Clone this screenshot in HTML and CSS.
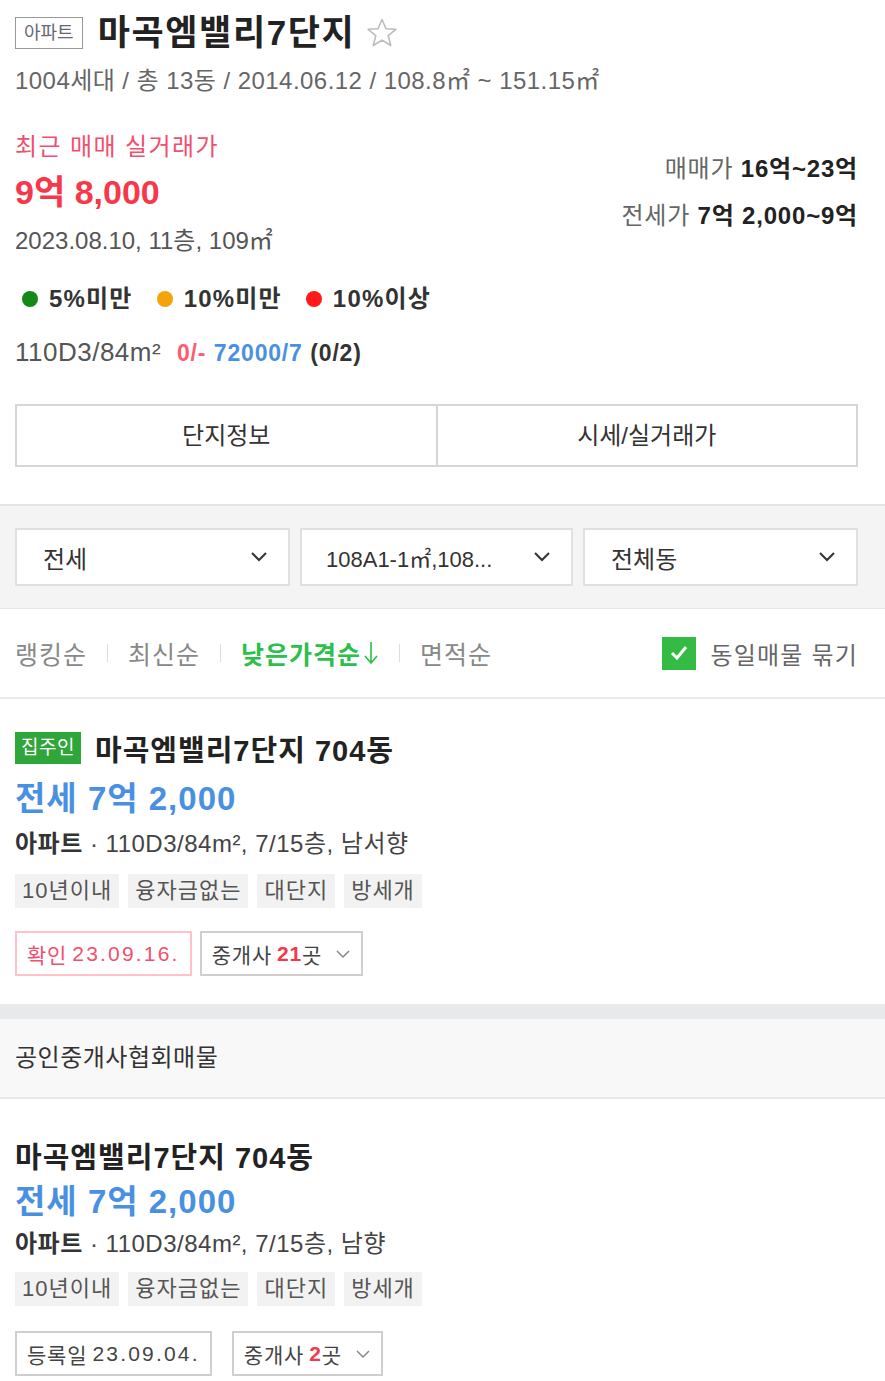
FILE: index.html
```html
<!DOCTYPE html>
<html lang="ko">
<head>
  <meta charset="UTF-8">
  <meta name="viewport" content="width=device-width, initial-scale=1.0">
  <title>마곡엠밸리7단지</title>
  <link rel="stylesheet" href="styles.css">
</head>
<body>
  <div class="complex">
    <div class="title-row">
      <span class="type-badge">아파트</span>
      <h1 class="complex-name">마곡엠밸리7단지</h1>
      <svg class="star" viewBox="0 0 24 24" width="34" height="34">
        <polygon points="12,2.5 14.8,9 21.8,9.4 16.4,13.9 18.2,20.8 12,17 5.8,20.8 7.6,13.9 2.2,9.4 9.2,9" fill="none" stroke="#bbb" stroke-width="1.1" stroke-linejoin="round"/>
      </svg>
    </div>
    <div class="summary">1004세대 / 총 13동 / 2014.06.12 / 108.8㎡ ~ 151.15㎡</div>

    <div class="price-block">
      <div class="recent">
        <div class="recent-label">최근 매매 실거래가</div>
        <div class="recent-price">9억 8,000</div>
        <div class="recent-date">2023.08.10, 11층, 109㎡</div>
      </div>
      <div class="range">
        <div class="range-row">매매가 <b>16억~23억</b></div>
        <div class="range-row range-gap">전세가 <b>7억 2,000~9억</b></div>
      </div>
    </div>

    <div class="legend">
      <span class="legend-item"><i class="dot dot-green"></i>5%미만</span>
      <span class="legend-item"><i class="dot dot-orange"></i>10%미만</span>
      <span class="legend-item"><i class="dot dot-red"></i>10%이상</span>
    </div>

    <div class="area-line">
      110D3/84m² <span class="cnt-red">0/-</span> <span class="cnt-blue">72000/7</span> <span class="cnt-dark">(0/2)</span>
    </div>

    <div class="tabs">
      <a class="tab">단지정보</a>
      <a class="tab">시세/실거래가</a>
    </div>
  </div>

  <div class="filters">
    <div class="select">
      <span>전세</span>
      <svg width="18" height="12" viewBox="0 0 18 12"><polyline points="2,2 9,9 16,2" fill="none" stroke="#333" stroke-width="2"/></svg>
    </div>
    <div class="select select-narrow">
      <span>108A1-1㎡,108...</span>
      <svg width="18" height="12" viewBox="0 0 18 12"><polyline points="2,2 9,9 16,2" fill="none" stroke="#333" stroke-width="2"/></svg>
    </div>
    <div class="select">
      <span>전체동</span>
      <svg width="18" height="12" viewBox="0 0 18 12"><polyline points="2,2 9,9 16,2" fill="none" stroke="#333" stroke-width="2"/></svg>
    </div>
  </div>

  <div class="sort-bar">
    <div class="sort-list">
      <span class="sort">랭킹순</span>
      <span class="sep"></span>
      <span class="sort">최신순</span>
      <span class="sep"></span>
      <span class="sort sort-on">낮은가격순<svg class="arrow" width="16" height="26" viewBox="0 0 16 26"><path d="M8 2 V23 M2 16 L8 23 L14 16" fill="none" stroke="#2cbf4a" stroke-width="1.6"/></svg></span>
      <span class="sep"></span>
      <span class="sort">면적순</span>
    </div>
    <label class="group-check">
      <span class="check-box">
        <svg width="22" height="22" viewBox="0 0 22 22"><polyline points="4,11 9,16 18,5" fill="none" stroke="#fff" stroke-width="3"/></svg>
      </span>
      동일매물 묶기
    </label>
  </div>

  <div class="item">
    <div class="item-title"><span class="owner-badge">집주인</span>마곡엠밸리7단지 704동</div>
    <div class="item-price">전세 7억 2,000</div>
    <div class="item-spec"><b>아파트</b> · 110D3/84m², 7/15층, 남서향</div>
    <div class="tags">
      <span class="tag">10년이내</span>
      <span class="tag">융자금없는</span>
      <span class="tag">대단지</span>
      <span class="tag">방세개</span>
    </div>
    <div class="item-btns">
      <span class="btn-box btn-confirm">확인 <em>23.09.16.</em></span>
      <span class="btn-box">중개사 <strong>21</strong>곳
        <svg width="16" height="10" viewBox="0 0 16 10"><polyline points="2,2 8,8 14,2" fill="none" stroke="#888" stroke-width="1.5"/></svg>
      </span>
    </div>
  </div>

  <div class="band"></div>
  <div class="section-head">공인중개사협회매물</div>

  <div class="item item-second">
    <div class="item-title">마곡엠밸리7단지 704동</div>
    <div class="item-price">전세 7억 2,000</div>
    <div class="item-spec"><b>아파트</b> · 110D3/84m², 7/15층, 남향</div>
    <div class="tags">
      <span class="tag">10년이내</span>
      <span class="tag">융자금없는</span>
      <span class="tag">대단지</span>
      <span class="tag">방세개</span>
    </div>
    <div class="item-btns">
      <span class="btn-box btn-wide">등록일 <em>23.09.04.</em></span>
      <span class="btn-box">중개사 <strong>2</strong>곳
        <svg width="16" height="10" viewBox="0 0 16 10"><polyline points="2,2 8,8 14,2" fill="none" stroke="#888" stroke-width="1.5"/></svg>
      </span>
    </div>
  </div>
</body>
</html>
```

FILE: styles.css
```css
body {
  margin: 0;
  font-family: 'Liberation Sans', 'Noto Sans CJK KR', sans-serif;
  color: #222;
  background: #fff;
}
.complex {
  padding: 13px 27px 0 15px;
}
.title-row {
  display: flex;
  align-items: center;
  height: 40px;
}
.type-badge {
  border: 1px solid #999;
  color: #667;
  font-size: 18px;
  line-height: 30px;
  padding: 0 8px;
  margin-right: 15px;
}
.complex-name {
  margin: 0;
  font-size: 35px;
  line-height: 40px;
  font-weight: bold;
  letter-spacing: 1.6px;
  color: #222;
}
.star {
  margin-left: 10px;
}
.summary {
  margin-top: 13px;
  font-size: 24px;
  line-height: 30px;
  letter-spacing: 0.45px;
  color: #666;
}
.price-block {
  display: flex;
  justify-content: space-between;
  margin-top: 36px;
}
.recent-label {
  font-size: 24px;
  line-height: 30px;
  color: #f0506e;
  letter-spacing: 1.4px;
}
.recent-price {
  margin-top: 10px;
  font-size: 34px;
  line-height: 40px;
  font-weight: bold;
  color: #f5394b;
}
.recent-date {
  margin-top: 14px;
  font-size: 24px;
  line-height: 30px;
  color: #555;
}
.range {
  padding-top: 22px;
  text-align: right;
}
.range-row {
  font-size: 24px;
  line-height: 30px;
  letter-spacing: 0.8px;
  color: #666;
}
.range-row b {
  color: #222;
}
.range-gap {
  margin-top: 17px;
}
.legend {
  display: flex;
  gap: 24px;
  margin-top: 28px;
  padding-left: 7px;
  font-size: 24px;
  line-height: 30px;
  font-weight: bold;
  letter-spacing: 1.2px;
  color: #333;
}
.legend-item {
  display: flex;
  align-items: center;
}
.dot {
  width: 16px;
  height: 16px;
  border-radius: 50%;
  margin-right: 11px;
}
.dot-green { background: #138a17; }
.dot-orange { background: #f5a30a; }
.dot-red { background: #ff1a1a; }
.area-line {
  margin-top: 23px;
  font-size: 26px;
  line-height: 30px;
  letter-spacing: 0.5px;
  color: #555;
}
.cnt-red, .cnt-blue, .cnt-dark {
  font-size: 23px;
  font-weight: bold;
  letter-spacing: 0.8px;
}
.cnt-red { color: #ff5a6e; margin-left: 8px; }
.cnt-blue { color: #4a90e2; }
.cnt-dark { color: #333; }
.tabs {
  display: flex;
  margin-top: 36px;
  border: 2px solid #d6d6d6;
}
.tab {
  flex: 1;
  text-align: center;
  font-size: 24px;
  line-height: 59px;
  color: #333;
}
.tab + .tab {
  border-left: 2px solid #d6d6d6;
}
.filters {
  display: flex;
  gap: 10px;
  margin-top: 37px;
  padding: 22px 27px 22px 15px;
  background: #f4f4f4;
  border-top: 2px solid #e3e3e3;
  border-bottom: 1px solid #e6e6e6;
}
.select {
  flex: 1;
  display: flex;
  justify-content: space-between;
  align-items: center;
  height: 54px;
  padding: 0 20px 0 26px;
  background: #fff;
  border: 2px solid #e0e0e0;
  font-size: 24px;
  color: #333;
}
.select-narrow {
  padding-left: 24px;
  flex: 0 0 273px;
  box-sizing: border-box;
  height: 58px;
}
.select-narrow span {
  font-size: 22px;
}
.sort-bar {
  display: flex;
  justify-content: space-between;
  align-items: center;
  height: 88px;
  padding: 0 27px 0 15px;
  border-bottom: 2px solid #ebebeb;
}
.sort-list {
  display: flex;
  align-items: center;
  gap: 20px;
}
.sort {
  display: flex;
  align-items: center;
  font-size: 25px;
  letter-spacing: 1px;
  color: #888;
}
.sort-on {
  color: #2cbf4a;
  font-weight: bold;
}
.arrow {
  margin-left: 2px;
}
.sep {
  width: 1px;
  height: 18px;
  background: #ddd;
}
.group-check {
  display: flex;
  align-items: center;
  gap: 14px;
  font-size: 24px;
  letter-spacing: 1.2px;
  color: #666;
}
.check-box {
  display: flex;
  align-items: center;
  justify-content: center;
  width: 34px;
  height: 33px;
  background: #33bb44;
}
.item {
  padding: 32px 27px 28px 15px;
}
.item-title {
  display: flex;
  align-items: center;
  height: 34px;
  font-size: 29px;
  font-weight: bold;
  letter-spacing: 1px;
  color: #222;
}
.owner-badge {
  background: #2ea63a;
  color: #fff;
  font-size: 19px;
  font-weight: normal;
  letter-spacing: 0.5px;
  line-height: 32px;
  padding: 0 6px;
  margin-right: 14px;
}
.item-price {
  margin-top: 14px;
  font-size: 33px;
  line-height: 40px;
  font-weight: bold;
  letter-spacing: 1px;
  color: #4a90e2;
}
.item-spec {
  margin-top: 10px;
  font-size: 24px;
  line-height: 30px;
  letter-spacing: 0.5px;
  color: #444;
}
.item-spec b {
  color: #333;
}
.tags {
  display: flex;
  gap: 9px;
  margin-top: 15px;
}
.tag {
  background: #f2f2f2;
  color: #555;
  font-size: 22px;
  line-height: 34px;
  letter-spacing: 1px;
  padding: 0 7px;
}
.item-btns {
  display: flex;
  gap: 8px;
  margin-top: 23px;
}
.btn-box {
  display: flex;
  align-items: center;
  gap: 5px;
  height: 41px;
  padding: 0 10px;
  border: 2px solid #cfcfcf;
  font-size: 21px;
  letter-spacing: 0.8px;
  color: #444;
}
.btn-box em {
  font-style: normal;
  letter-spacing: 2.2px;
}
.btn-box strong {
  color: #f5394b;
  margin-right: -5px;
}
.btn-box svg {
  margin-left: 8px;
}
.btn-confirm {
  border-color: #ffc2c8;
  color: #f0506e;
}
.btn-wide {
  margin-right: 12px;
}
.band {
  height: 15px;
  background: #e8e9eb;
}
.section-head {
  height: 78px;
  line-height: 78px;
  padding-left: 15px;
  background: #f8f8f8;
  border-bottom: 2px solid #e9e9e9;
  font-size: 24px;
  letter-spacing: 0.5px;
  color: #333;
}
.item-second {
  padding-top: 39px;
}
.item-second .item-price {
  margin-top: 10px;
}
.item-second .item-spec {
  margin-top: 7px;
}
.item-second .tags {
  margin-top: 13px;
}
.item-second .item-btns {
  margin-top: 25px;
}
```
